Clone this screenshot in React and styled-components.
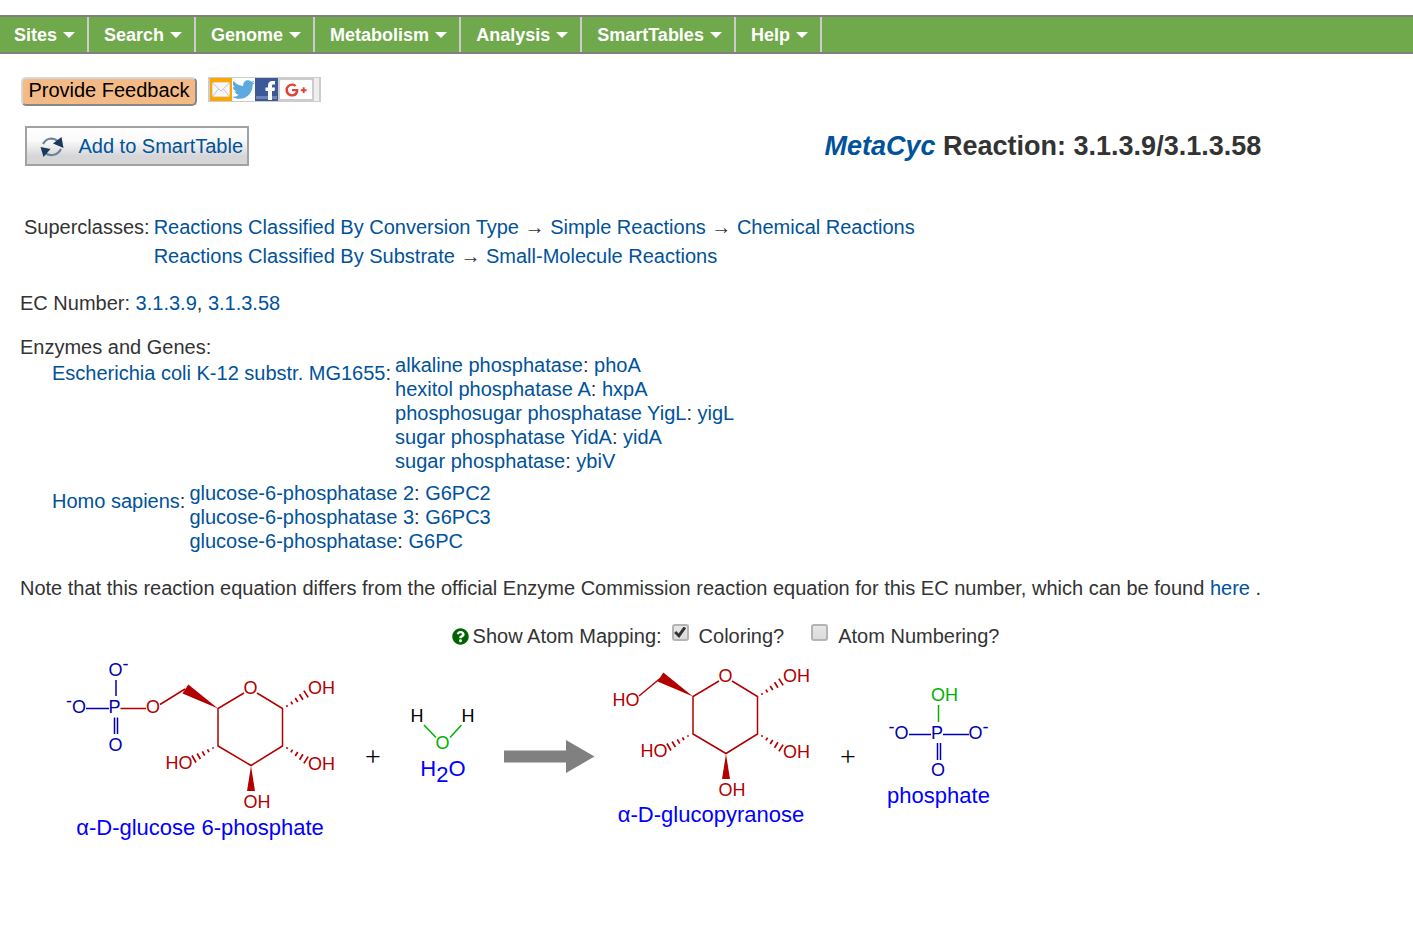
import React, { useState } from "react";
import styled, { createGlobalStyle } from "styled-components";
import { FaQuestionCircle, FaTwitter, FaGooglePlusG } from "react-icons/fa";

const Global = createGlobalStyle`
  * { box-sizing: border-box; }
  body {
    margin: 0;
    background: #fff;
    color: #333;
    font-family: "Liberation Sans", Arial, sans-serif;
    font-size: 20px;
    line-height: 24px;
  }
`;

const MenuBar = styled.nav`
  display: flex;
  flex-wrap: wrap;
  margin-top: 15px;
  min-height: 39px;
  background: #70a84c;
  border-top: 2px solid #808080;
  border-bottom: 2px solid #808080;
`;

const MenuButton = styled.button`
  display: flex;
  align-items: center;
  gap: 6px;
  height: 35px;
  padding: 2px 12px 0 15px;
  border: 0;
  border-right: 2px solid #ccc;
  background: transparent;
  color: #fff;
  font: bold 18px "Liberation Sans", Arial, sans-serif;
  cursor: pointer;
  &:first-child { padding-left: 14px; }
`;

const Caret = styled.span`
  border: 6px solid transparent;
  border-top-color: #fff;
  border-bottom-width: 2px;
`;

const Page = styled.main`
  padding: 0 20px;
`;

const Tools = styled.div`
  display: flex;
  align-items: flex-start;
  gap: 11px;
  margin-top: 23px;
  padding-left: 1px;
`;

const FeedbackButton = styled.button`
  width: 176px;
  height: 29px;
  padding: 0 0 3px;
  border: 2px solid;
  border-color: #d8d8d8 #888 #888 #d8d8d8;
  border-radius: 5px;
  background: #f3ba85;
  color: #000;
  font: 20px/22px "Liberation Sans", Arial, sans-serif;
  cursor: pointer;
`;

const ShareBar = styled.div`
  display: flex;
  height: 25px;
  padding: 1px 2px;
  background: #ccc;
`;

const ShareLink = styled.a`
  display: flex;
  align-items: center;
  justify-content: center;
  width: ${(p) => p.$w || 23}px;
  height: 23px;
  background: ${(p) => p.$bg};
  color: ${(p) => p.$fg};
`;

const PlusLink = styled(ShareLink)`
  height: 19px;
  margin: 2px;
  border-radius: 1px;
`;

const ShareMore = styled.span`
  width: 5px;
  height: 23px;
  background: #eee;
`;

const Header = styled.header`
  display: grid;
  grid-template-columns: 49fr 51fr;
  align-items: center;
  margin-top: 20px;
`;

const SmartTableButton = styled.button`
  display: flex;
  align-items: center;
  justify-content: space-between;
  width: 224px;
  height: 40px;
  margin-left: 5px;
  padding: 0 4px 0 12px;
  border: 2px solid #a2a2a2;
  background: linear-gradient(#fff 0%, #fafafa 35%, #d6d6d8 78%, #d6d6d8 100%);
  color: #00529b;
  font: 20px "Liberation Sans", Arial, sans-serif;
  cursor: pointer;
`;

const Title = styled.h1`
  margin: 0;
  text-align: center;
  font-size: 27px;
  line-height: 32px;
`;

const Link = styled.a`
  color: #00529b;
  text-decoration: none;
`;

const Classes = styled.dl`
  display: flex;
  gap: 4px;
  margin: 47px 0 0 4px;
  line-height: 29px;
`;

const Detail = styled.dd`
  margin: 0;
`;

const Line = styled.p`
  margin: ${(p) => p.$top || 20}px 0 0;
`;

const Organisms = styled.dl`
  display: flex;
  flex-direction: column;
  gap: 8px;
  margin: -6px 0 0 32px;
`;

const Organism = styled.div`
  display: flex;
  gap: 4px;
`;

const OrganismName = styled.dt`
  padding-top: 8px;
`;

const MappingBar = styled.div`
  display: flex;
  flex-wrap: wrap;
  justify-content: center;
  margin-top: 24px;
  padding-left: 38px;
`;

const MappingTitle = styled.span`
  display: flex;
  align-items: center;
  gap: 4px;
  margin-right: 10px;
  svg { color: #006400; }
`;

const Option = styled.label`
  display: flex;
  gap: 10px;
  & + & { margin-left: 27px; }
`;

const Tick = styled.input`
  appearance: none;
  display: grid;
  place-items: center;
  width: 17px;
  height: 17px;
  margin: 0;
  border: 2px solid #b4b4b4;
  border-radius: 3px;
  background: linear-gradient(#e6e6e6, #dcdcdc);
  &:checked::after {
    content: "";
    width: 12px;
    height: 12px;
    background: #333;
    clip-path: polygon(0 55%, 18% 38%, 38% 58%, 80% 0, 100% 14%, 42% 96%);
  }
`;

const Diagram = styled.svg`
  display: block;
  max-width: 100%;
  height: auto;
  margin-top: 7px;
  font-family: "Liberation Sans", Arial, sans-serif;
`;

const Atom = styled.text`
  font-size: 18px;
  text-anchor: middle;
`;

const Caption = styled.text`
  font-size: 22px;
  text-anchor: middle;
  fill: #00f;
`;

const Sign = styled.text`
  font: 28px "Liberation Serif", "Times New Roman", serif;
  text-anchor: middle;
  fill: #000;
`;

const RED = "#b20000";
const BLUE = "#0000b2";
const GREEN = "#00b200";

const MENUS = ["Sites", "Search", "Genome", "Metabolism", "Analysis", "SmartTables", "Help"];

const SUPERCLASSES = [
  ["Reactions Classified By Conversion Type", "Simple Reactions", "Chemical Reactions"],
  ["Reactions Classified By Substrate", "Small-Molecule Reactions"],
];

const ORGANISMS = [
  {
    name: "Escherichia coli K-12 substr. MG1655",
    enzymes: [
      ["alkaline phosphatase", "phoA"],
      ["hexitol phosphatase A", "hxpA"],
      ["phosphosugar phosphatase YigL", "yigL"],
      ["sugar phosphatase YidA", "yidA"],
      ["sugar phosphatase", "ybiV"],
    ],
  },
  {
    name: "Homo sapiens",
    enzymes: [
      ["glucose-6-phosphatase 2", "G6PC2"],
      ["glucose-6-phosphatase 3", "G6PC3"],
      ["glucose-6-phosphatase", "G6PC"],
    ],
  },
];

function RefreshIcon() {
  return (
    <svg width="26" height="24" viewBox="0 0 26 24" fill="none" aria-hidden="true">
      <path d="M4 10C7 4 14 3 19 7" stroke="#6f8398" strokeWidth="2.2" />
      <path d="M22 15C19 21 12 23 6 19" stroke="#6f8398" strokeWidth="2.2" />
      <path d="M14 9.500 22.500 3 24.500 14Z" fill="#173a5e" />
      <path d="M1.500 13 11.500 15 4.500 23Z" fill="#173a5e" />
    </svg>
  );
}

function MailIcon() {
  return (
    <svg width="18" height="15" viewBox="0 0 18 15" aria-hidden="true">
      <rect x="0.5" y="0.5" width="17" height="14" rx="1.500" fill="#f6f6f6" stroke="#ddd" />
      <path d="M1 1.500 9 9 17 1.500M1 14 6.500 7M17 14 11.500 7" fill="none" stroke="#c4c4c4" />
    </svg>
  );
}

function FacebookIcon() {
  return (
    <svg width="23" height="23" viewBox="0 0 23 23" aria-hidden="true">
      <rect x="1" y="18" width="21" height="3" fill="#6d84b4" />
      <path d="M13 22V13H10.500V9.500H13V7.500C13 4.500 14.500 3 17.500 3H20V6.500H18.300C17.200 6.500 17 7 17 8V9.500H20L19.500 13H17V22Z" fill="#fff" />
    </svg>
  );
}

function Hashed({ from, to }) {
  const [x1, y1] = from;
  const [x2, y2] = to;
  const length = Math.hypot(x2 - x1, y2 - y1);
  const nx = -(y2 - y1) / length;
  const ny = (x2 - x1) / length;
  const marks = [0, 1, 2, 3, 4].map((i) => {
    const t = i / 4;
    const half = 0.8 + t * 3.2;
    const x = x1 + (x2 - x1) * t;
    const y = y1 + (y2 - y1) * t;
    return `M${x - nx * half} ${y - ny * half}L${x + nx * half} ${y + ny * half}`;
  });
  return <path d={marks.join("")} stroke={RED} strokeWidth="1.700" />;
}

function GlucoseRing({ x, y }) {
  return (
    <g transform={`translate(${x} ${y})`} fill={RED}>
      <path
        d="M224 38 198 53.500V91L231 110.500 262.500 91V53.500L237 38"
        fill="none"
        stroke={RED}
        strokeWidth="1.500"
      />
      <path d="M198 53.500 168.300 29.500 162.500 38.500Z" />
      <path d="M231 111 227 136H235Z" />
      <Hashed from={[267, 51]} to={[286, 39]} />
      <Hashed from={[267, 93]} to={[286, 105]} />
      <Hashed from={[193, 93]} to={[174, 104]} />
      <Atom x="230.500" y="39">O</Atom>
      <Atom x="301.500" y="39">OH</Atom>
      <Atom x="301.500" y="115">OH</Atom>
      <Atom x="159" y="114">HO</Atom>
      <Atom x="237" y="153">OH</Atom>
    </g>
  );
}

function ReactionDiagram() {
  return (
    <Diagram width="1000" height="190" viewBox="0 0 1000 190" role="img" aria-label="Reaction equation">
      <GlucoseRing x={0} y={0} />
      <g strokeWidth="1.500" fill="none" stroke={BLUE}>
        <path d="M96 25V41M66 53.500H89M94.500 62.500V79M97.500 62.500V79" />
        <path d="M100.500 53.500H126M140 49.500 165 34" stroke={RED} />
      </g>
      <g fill={BLUE}>
        <Atom x="95.500" y="21">O</Atom>
        <Atom x="105.500" y="15">-</Atom>
        <Atom x="94.500" y="58">P</Atom>
        <Atom x="59" y="58">O</Atom>
        <Atom x="49" y="52">-</Atom>
        <Atom x="95.500" y="96">O</Atom>
        <Atom x="133" y="58" fill={RED}>O</Atom>
      </g>
      <a href="#glucose-6-phosphate"><Caption x="180" y="180">α-D-glucose 6-phosphate</Caption></a>

      <Sign x="353" y="111">+</Sign>

      <path d="M404 70 416 82.500M441.500 70 430 82.500" stroke={GREEN} strokeWidth="1.500" />
      <Atom x="397" y="67">H</Atom>
      <Atom x="448" y="67">H</Atom>
      <Atom x="422.500" y="94" fill={GREEN}>O</Atom>
      <a href="#water">
        <Caption x="423" y="121">H<tspan dy="6">2</tspan><tspan dy="-6">O</tspan></Caption>
      </a>

      <path d="M484 95.500H546V85L574.500 101.500 546 118V107.500H484Z" fill="#808080" />

      <GlucoseRing x={475} y={-12} />
      <path d="M619 41 640 23.500" stroke={RED} strokeWidth="1.500" />
      <Atom x="606" y="51" fill={RED}>HO</Atom>
      <a href="#glucopyranose"><Caption x="691" y="167">α-D-glucopyranose</Caption></a>

      <Sign x="828" y="111">+</Sign>

      <path d="M918.500 50V67" stroke={GREEN} strokeWidth="1.500" />
      <path d="M889 79.500H911M923 79.500H949M917.500 88V105M920.500 88V105" stroke={BLUE} strokeWidth="1.500" />
      <g fill={BLUE}>
        <Atom x="924.500" y="46" fill={GREEN}>OH</Atom>
        <Atom x="917" y="84">P</Atom>
        <Atom x="881.500" y="84">O</Atom>
        <Atom x="871.500" y="78">-</Atom>
        <Atom x="955.500" y="84">O</Atom>
        <Atom x="965.500" y="78">-</Atom>
        <Atom x="918" y="121">O</Atom>
      </g>
      <a href="#phosphate"><Caption x="918.500" y="148">phosphate</Caption></a>
    </Diagram>
  );
}

export default function App() {
  const [coloring, setColoring] = useState(true);
  const [numbering, setNumbering] = useState(false);

  return (
    <>
      <Global />
      <MenuBar>
        {MENUS.map((name) => (
          <MenuButton key={name} type="button">
            {name}
            <Caret />
          </MenuButton>
        ))}
      </MenuBar>
      <Page>
        <Tools>
          <FeedbackButton type="button">Provide Feedback</FeedbackButton>
          <ShareBar>
            <ShareLink href="#mail" aria-label="Email" $w={22} $bg="#ffa500"><MailIcon /></ShareLink>
            <ShareLink href="#twitter" aria-label="Twitter" $bg="#fff" $fg="#5ea9dd"><FaTwitter size={23} /></ShareLink>
            <ShareLink href="#facebook" aria-label="Facebook" $bg="#3b5998"><FacebookIcon /></ShareLink>
            <PlusLink href="#plus" aria-label="Google Plus" $w={32} $bg="#fff" $fg="#db4437"><FaGooglePlusG size={22} /></PlusLink>
            <ShareMore />
          </ShareBar>
        </Tools>

        <Header>
          <SmartTableButton type="button">
            <RefreshIcon />
            Add to SmartTable
          </SmartTableButton>
          <Title><Link href="#metacyc"><em>MetaCyc</em></Link> Reaction: 3.1.3.9/3.1.3.58</Title>
        </Header>

        <Classes>
          <dt>Superclasses:</dt>
          <Detail>
            {SUPERCLASSES.map((path) => (
              <div key={path[0]}>
                {path.map((name, i) => (
                  <React.Fragment key={name}>
                    {i > 0 && " → "}
                    <Link href="#class">{name}</Link>
                  </React.Fragment>
                ))}
              </div>
            ))}
          </Detail>
        </Classes>

        <Line>EC Number: <Link href="#3.1.3.9">3.1.3.9</Link>, <Link href="#3.1.3.58">3.1.3.58</Link></Line>

        <Line>Enzymes and Genes:</Line>
        <Organisms>
          {ORGANISMS.map(({ name, enzymes }) => (
            <Organism key={name}>
              <OrganismName><Link href="#organism">{name}</Link>:</OrganismName>
              <Detail>
                {enzymes.map(([enzyme, gene]) => (
                  <div key={gene}>
                    <Link href="#enzyme">{enzyme}</Link>: <Link href="#gene">{gene}</Link>
                  </div>
                ))}
              </Detail>
            </Organism>
          ))}
        </Organisms>

        <Line $top={23}>
          Note that this reaction equation differs from the official Enzyme Commission reaction equation for this EC
          number, which can be found <Link href="#here">here</Link> .
        </Line>

        <MappingBar>
          <MappingTitle><FaQuestionCircle size={17} />Show Atom Mapping:</MappingTitle>
          <Option>
            <Tick type="checkbox" checked={coloring} onChange={(e) => setColoring(e.target.checked)} />
            Coloring?
          </Option>
          <Option>
            <Tick type="checkbox" checked={numbering} onChange={(e) => setNumbering(e.target.checked)} />
            Atom Numbering?
          </Option>
        </MappingBar>

        <ReactionDiagram />
      </Page>
    </>
  );
}
